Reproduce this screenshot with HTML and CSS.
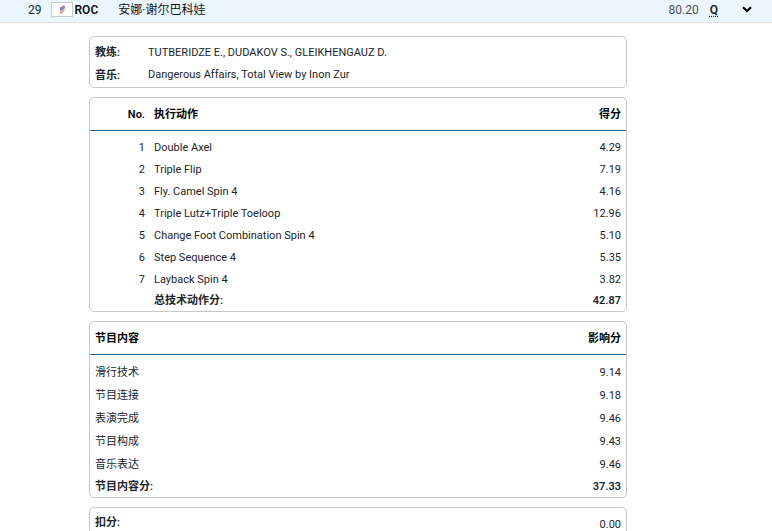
FILE: index.html
```html
<!DOCTYPE html>
<html lang="zh-CN">
<head>
<meta charset="utf-8">
<title>安娜·谢尔巴科娃</title>
<link rel="stylesheet" href="styles.css">
</head>
<body>
<header class="athlete">
  <span class="rank">29</span>
  <svg class="flag" viewBox="0 0 22 15" aria-hidden="true">
    <rect x=".5" y=".5" width="21" height="14" fill="#fff" stroke="#ccc"/>
    <path d="M9 6 L12 3 L14 3 L10 8Z" fill="#c3cbe4"/>
    <path d="M9 8 C9 5 11 4 14 4 L14 6 L10 10Z" fill="#6478b8" opacity=".8"/>
    <path d="M8 11 L13 7 L14 8 L11 12Z" fill="#e4aaa5"/>
    <path d="M9 5 L12 5 L11 7 L9 8Z" fill="#d0606a" opacity=".6"/>
  </svg>
  <b class="country">ROC</b>
  <span class="name">安娜·谢尔巴科娃</span>
  <span class="score">80.20</span>
  <abbr class="qualified">Q</abbr>
  <button class="toggle" type="button" aria-label="收起">
    <svg viewBox="0 0 10 7" aria-hidden="true"><path d="M1 1.2 L5 5 L9 1.2" fill="none" stroke="#000" stroke-width="2.2"/></svg>
  </button>
</header>
<main class="details">
  <dl class="card info">
    <dt>教练:</dt><dd class="coaches">TUTBERIDZE E., DUDAKOV S., GLEIKHENGAUZ D.</dd>
    <dt>音乐:</dt><dd>Dangerous Affairs, Total View by Inon Zur</dd>
  </dl>
  <section class="card">
    <table class="scores elements">
      <thead><tr><th class="number">No.</th><th>执行动作</th><th class="value">得分</th></tr></thead>
      <tbody>
        <tr><td class="number">1</td><td>Double Axel</td><td class="value">4.29</td></tr>
        <tr><td class="number">2</td><td>Triple Flip</td><td class="value">7.19</td></tr>
        <tr><td class="number">3</td><td>Fly. Camel Spin 4</td><td class="value">4.16</td></tr>
        <tr><td class="number">4</td><td>Triple Lutz+Triple Toeloop</td><td class="value">12.96</td></tr>
        <tr><td class="number">5</td><td>Change Foot Combination Spin 4</td><td class="value">5.10</td></tr>
        <tr><td class="number">6</td><td>Step Sequence 4</td><td class="value">5.35</td></tr>
        <tr><td class="number">7</td><td>Layback Spin 4</td><td class="value">3.82</td></tr>
      </tbody>
      <tfoot><tr><td></td><td>总技术动作分:</td><td class="value">42.87</td></tr></tfoot>
    </table>
  </section>
  <section class="card">
    <table class="scores components">
      <thead><tr><th>节目内容</th><th class="value">影响分</th></tr></thead>
      <tbody>
        <tr><td>滑行技术</td><td class="value">9.14</td></tr>
        <tr><td>节目连接</td><td class="value">9.18</td></tr>
        <tr><td>表演完成</td><td class="value">9.46</td></tr>
        <tr><td>节目构成</td><td class="value">9.43</td></tr>
        <tr><td>音乐表达</td><td class="value">9.46</td></tr>
      </tbody>
      <tfoot><tr><td>节目内容分:</td><td class="value">37.33</td></tr></tfoot>
    </table>
  </section>
  <dl class="card deduction"><dt>扣分:</dt><dd>0.00</dd></dl>
</main>
</body>
</html>
```
FILE: styles.css
```css
* { box-sizing: border-box; }
html { overflow: hidden; }
body {
  margin: 0;
  background: #fff;
  color: #212529;
  font: 11px/22px Roboto, "Noto Sans CJK SC", sans-serif;
}
.athlete {
  display: flex;
  align-items: center;
  height: 23px;
  padding: 0 20px 3px 28px;
  border-bottom: 1px solid #dcdfe2;
  background: #ebf7ff;
  font-size: 12px;
  line-height: 20px;
}
.flag { width: 22px; height: 15px; margin-left: 9px; }
.country { margin: 0 20px 0 2px; color: #111; font-weight: 600; }
.name { color: #111; }
.score { margin-left: auto; color: #495057; }
.qualified { margin-left: 11px; font-weight: 600; text-decoration: underline dotted; text-underline-offset: 2px; }
.toggle { display: flex; width: 10px; margin-left: 24px; padding: 0; border: 0; background: none; }
.toggle svg { width: 10px; height: 7px; }
.details {
  display: flex;
  flex-direction: column;
  gap: 9px;
  padding: 13px 145px 0 89px;
}
.card { margin: 0; border: 1px solid #c8c8c8; border-radius: 5px; }
.info { display: grid; grid-template-columns: 53px 1fr; padding: 4px 5px 0; }
.info dt { line-height: 23px; }
.info .coaches { align-self: end; }
dt, th, tfoot td { font-weight: 600; }
dd { margin: 0; }
th { color: #000; }
.scores { width: 100%; border-collapse: separate; border-spacing: 0; }
.scores th { height: 33px; padding: 2px 0 0; border-bottom: 1px solid #266a96; text-align: left; }
.scores td { padding: 0; }
.scores tbody tr:first-child td { padding-top: 6px; }
.scores tfoot td { line-height: 20px; }
.scores .number { width: 64px; padding-right: 9px; text-align: right; }
.elements tfoot td:first-child { width: 64px; }
.scores .value { padding-right: 5px; text-align: right; }
.components tbody td { line-height: 23px; }
.components tfoot td { line-height: 21px; }
.components th:first-child, .components td:first-child { padding-left: 5px; }
.deduction { display: flex; justify-content: space-between; padding: 4px 5px; }
.deduction dd { padding-top: 2px; }
```
